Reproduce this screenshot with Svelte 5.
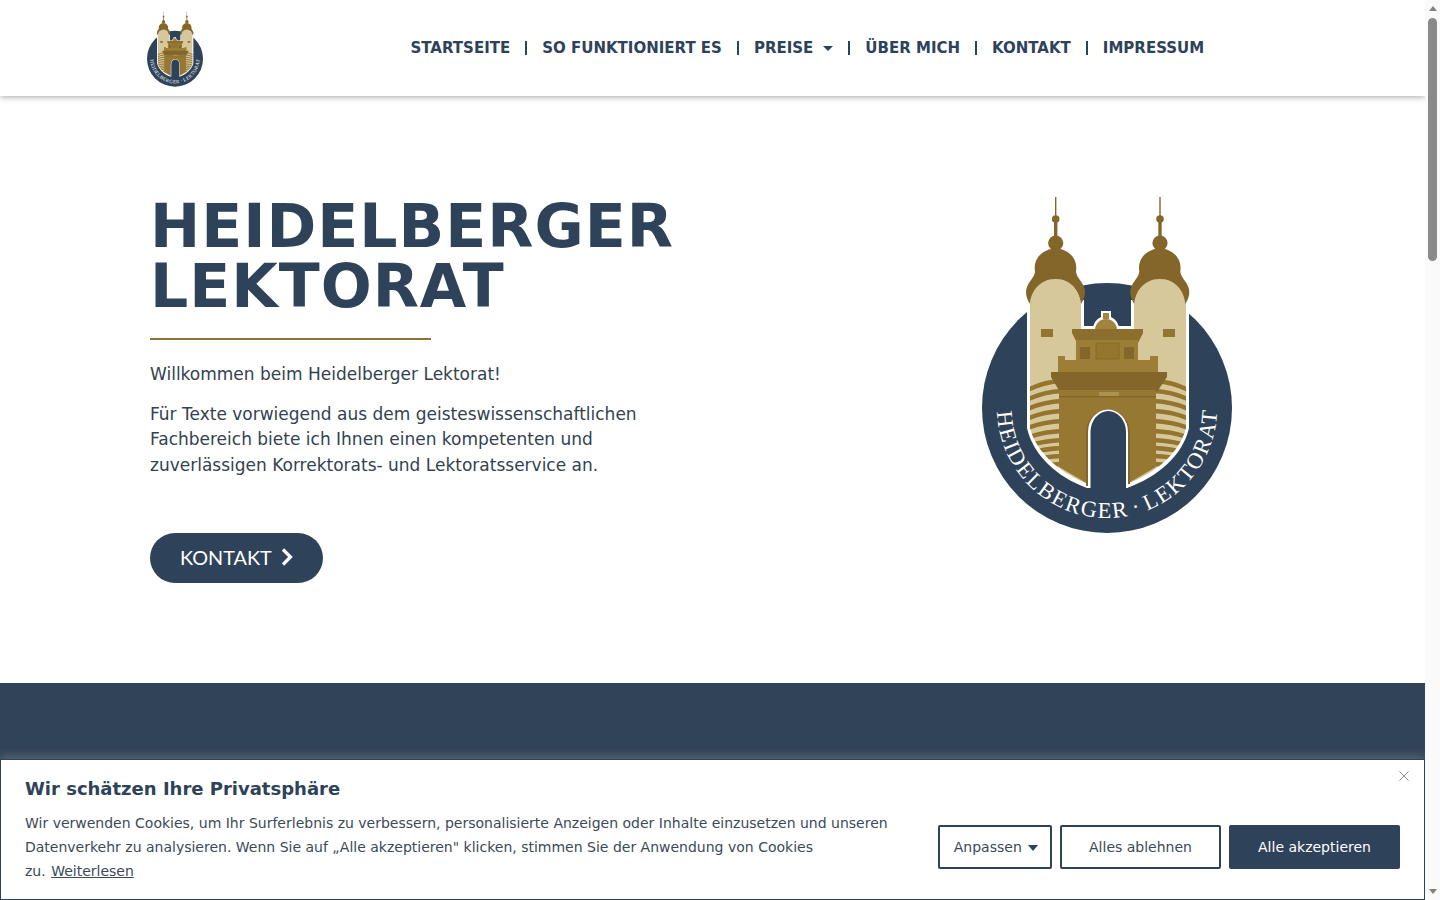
<script>
  const nav = [
    { label: "STARTSEITE" },
    { label: "SO FUNKTIONIERT ES" },
    { label: "PREISE", caret: true },
    { label: "ÜBER MICH" },
    { label: "KONTAKT" },
    { label: "IMPRESSUM" },
  ];

  // bands on the tower walls, y where they meet the gate
  const bands = [381, 391, 401, 411, 421, 431, 440, 448, 456, 464];

  const dome = "M1030 304C1026 298 1025 292 1027 287C1029 281 1034 278 1035 272C1033 258 1042 250 1055.7 248C1069 250 1078 258 1076 272C1077 278 1082 281 1084 287C1086 292 1085 298 1081 304C1080 290 1070 279 1055.7 279C1041 279 1031 290 1030 304Z";
</script>

{#snippet tower()}
  <path d="M1055 197h1.400V216h-1.400zM1054 222h3.400v16h-3.400z" />
  <circle cx="1055.7" cy="219" r="3.800" />
  <circle cx="1055.7" cy="243" r="7.600" />
  <path d={dome} />
{/snippet}

{#snippet logo(cls)}
  <svg class={cls} viewBox="982 196 250 337" aria-label="Heidelberger Lektorat">
    <defs>
      <clipPath id="{cls}-shield">
        <path d="M1030 305C1030 290 1041 279 1056 279C1070 279 1081 290 1081 305V329H1134V305C1134 290 1145 279 1160 279C1174 279 1186 290 1186 305V428C1180 452 1156 473 1127 484H1088C1060 473 1036 452 1030 428Z" />
      </clipPath>
      <path id="{cls}-arc" d="M997 408A110 110 0 0 0 1217 408" />
    </defs>

    <circle cx="1107" cy="408" r="125" fill="#2e4259" />

    <path fill="#fff" d="M1027 300H1084V326H1131V300H1189V428C1183 455 1158 477 1127 488H1087C1057 477 1033 455 1027 428Z" />
    <path fill="#d6c89b" clip-path="url(#{cls}-shield)" d="M1030 270H1186V490H1030Z" />

    <g clip-path="url(#{cls}-shield)" fill="none" stroke="#94752f" stroke-width="4.400">
      {#each bands as y, i}
        <path d="M1026 {y + 10 - i * 0.6}Q1042 {y + 1} 1062 {y}" />
        <path d="M1190 {y + 10 - i * 0.6}Q1174 {y + 1} 1154 {y}" />
      {/each}
    </g>

    <!-- towers -->
    <rect x="1041" y="329" width="12" height="8" fill="#94752f" />
    <rect x="1163" y="329" width="12" height="8" fill="#94752f" />
    <g fill="#85662a">{@render tower()}</g>
    <g fill="#85662a" transform="translate(104.300 0)">{@render tower()}</g>

    <!-- gate -->
    <path fill="#fff" d="M1093 330A13 14 0 0 1 1101 317V311H1111V317A13 14 0 0 1 1119 330Z" />
    <path fill="#a1843e" d="M1095 330A11 11 0 0 1 1117 330Z" />
    <rect x="1103" y="313" width="6" height="6" fill="#a1843e" />
    <path fill="#8c6e2d" d="M1072 329H1143V333L1138 343H1077L1072 333Z" />
    <rect x="1076" y="340" width="62" height="20" fill="#9c7e36" />
    <rect x="1080" y="347" width="10" height="12" fill="#85662a" />
    <rect x="1124" y="347" width="10" height="12" fill="#85662a" />
    <rect x="1096" y="343" width="23" height="16" fill="#94762f" stroke="#85662a" stroke-width=".8" />
    <path fill="#9c7e36" d="M1058 356H1065V360H1150V356H1158V373H1058Z" />
    <path fill="#85662a" d="M1051 372H1167V377L1157 392H1060L1051 377Z" />
    <path fill="#967832" d="M1059 390H1156V467L1127 484H1088L1059 467Z" />
    <rect x="1059" y="396" width="97" height="1.400" fill="#85662a" />
    <rect x="1099" y="392" width="20" height="4" fill="#ad9150" />
    <path fill="#85662a" d="M1086 486V432A21.500 21.500 0 0 1 1130 432V484Z" />
    <path fill="#fff" d="M1088 489V432A19.500 22 0 0 1 1128 432V489Z" />
    <path fill="#2e4259" d="M1090.500 495V432A17 20 0 0 1 1126 432V495Z" />
    <path fill="#2e4259" d="M1086 488H1131V500H1086Z" />

    <text class="seal" fill="#fff">
      <textPath href="#{cls}-arc" startOffset="4" textLength="338" lengthAdjust="spacing">HEIDELBERGER · LEKTORAT</textPath>
    </text>
  </svg>
{/snippet}

<div class="window">
  <div class="page">
    <header>
      {@render logo("mark")}
      <nav>
        {#each nav as item, i}
          {#if i > 0}<span class="sep"></span>{/if}
          <a href="#top">
            {item.label}
            {#if item.caret}<span class="caret"></span>{/if}
          </a>
        {/each}
      </nav>
    </header>

    <section class="hero">
      <div class="intro">
        <h1>HEIDELBERGER<br />LEKTORAT</h1>
        <div class="rule"></div>
        <p>Willkommen beim Heidelberger Lektorat!</p>
        <p>Für Texte vorwiegend aus dem geisteswissenschaftlichen<br />Fachbereich biete ich Ihnen einen kompetenten und<br />zuverlässigen Korrektorats- und Lektoratsservice an.</p>
        <a class="cta" href="#top">
          KONTAKT
          <svg viewBox="0 0 12 18" width="12" height="18"><path d="M2 1.500 9.500 9 2 16.500" fill="none" stroke="#fff" stroke-width="3.200" /></svg>
        </a>
      </div>
      {@render logo("seal-logo")}
    </section>

    <section class="dark"></section>

    <aside class="cookies">
      <div class="copy">
        <h2>Wir schätzen Ihre Privatsphäre</h2>
        <p>Wir verwenden Cookies, um Ihr Surferlebnis zu verbessern, personalisierte Anzeigen oder Inhalte einzusetzen und unseren<br />Datenverkehr zu analysieren. Wenn Sie auf „Alle akzeptieren" klicken, stimmen Sie der Anwendung von Cookies<br />zu. <a href="#top">Weiterlesen</a></p>
      </div>
      <div class="actions">
        <button class="outline custom">Anpassen <span class="down"></span></button>
        <button class="outline reject">Alles ablehnen</button>
        <button class="solid">Alle akzeptieren</button>
      </div>
      <svg class="close" viewBox="0 0 10 10" width="10" height="10"><path d="M.5.500l9 9M9.500.500l-9 9" stroke="#5d6d7e" stroke-width=".8" fill="none" /></svg>
    </aside>
  </div>

  <div class="scrollbar">
    <span class="arrow up"></span>
    <span class="thumb"></span>
    <span class="arrow dn"></span>
  </div>
</div>

<style>
  :global(body) { margin: 0; background: #fff; overflow: hidden; }

  .window { display: grid; grid-template-columns: 1fr 15px; height: 100vh; overflow: hidden; font-family: "DejaVu Sans", sans-serif; color: #2e4259; }
  .page { position: relative; overflow: hidden; display: flex; flex-direction: column; }

  header { position: relative; z-index: 2; flex: none; height: 96px; display: flex; align-items: center; padding-left: 147px; background: #fff; box-shadow: 0 1px 6px rgba(0,0,0,.35); }
  :global(.mark) { width: 56px; height: 76px; margin-top: 2px; flex: none; }
  nav { display: flex; align-items: center; margin-left: 207.500px; }
  nav a { color: #2e4259; font-size: 15px; font-weight: 700; text-decoration: none; white-space: nowrap; display: flex; align-items: center; gap: 10px; }
  .sep { width: 2px; height: 14px; margin: 0 15px; background: #2e4259; }
  .caret { width: 0; height: 0; border: 5px solid transparent; border-top: 5px solid #2e4259; border-bottom: 0; }

  .hero { flex: none; height: 587px; box-sizing: border-box; display: flex; justify-content: space-between; padding: 100px 193px 0 150px; }
  .intro { width: 560px; }
  h1 { margin: 0; font-size: 60px; line-height: 60px; font-weight: 700; letter-spacing: 1px; white-space: nowrap; }
  .rule { width: 281px; height: 2px; margin: 22px 0 22px; background: #8f7130; }
  .intro p { margin: 0 0 14px; font-size: 17px; line-height: 25.500px; color: #33424f; white-space: nowrap; }
  .cta { display: inline-flex; align-items: center; gap: 9px; box-sizing: border-box; height: 50px; margin-top: 41px; padding: 0 30px 2px; border-radius: 25px; background: #2e4259; color: #fff; font-family: Lato, sans-serif; font-size: 19.800px; text-decoration: none; }
  :global(.seal-logo) { width: 250px; height: 337px; flex: none; margin-top: 0; }
  :global(.seal) { font-family: "Liberation Serif", serif; font-size: 22.500px; word-spacing: -3px; }

  .dark { flex: 1; background: #314358; }

  .cookies { position: absolute; left: 0; right: 0; bottom: 0; z-index: 3; box-sizing: border-box; height: 141px; display: flex; justify-content: space-between; align-items: flex-end; padding: 0 24px 18px 24px; background: #fff; border: 1px solid #2e4259; box-shadow: 0 -2px 10px rgba(190,190,190,.35); }
  h2 { margin: 0 0 10px; font-size: 18px; line-height: 24px; font-weight: 700; color: #2e4259; }
  .copy p { margin: 0 0 -2px; font-size: 14px; line-height: 24px; color: #3b4a57; white-space: nowrap; }
  .copy a { margin-left: 1px; color: inherit; }
  .actions { display: flex; gap: 8px; margin-bottom: 12px; }
  button { box-sizing: border-box; height: 44px; border-radius: 2px; font: inherit; font-size: 14px; cursor: pointer; }
  .outline { background: #fff; border: 2px solid #2e4259; color: #3b4a57; }
  .custom { width: 114px; padding: 0 0 0 2px; }
  .reject { width: 161px; }
  .solid { width: 171px; background: #2e4259; border: 0; color: #fff; }
  .down { display: inline-block; margin-left: 2px; vertical-align: middle; width: 0; height: 0; border: 5px solid transparent; border-top: 6px solid #2e4259; border-bottom: 0; }
  .close { position: absolute; top: 11px; right: 15px; }

  .scrollbar { display: flex; flex-direction: column; align-items: center; background: #fafafa; }
  .arrow { flex: none; width: 0; height: 0; border: 4.500px solid transparent; }
  .arrow.up { margin-top: 6px; border-bottom: 5px solid #808080; border-top: 0; }
  .arrow.dn { margin-top: auto; margin-bottom: 6px; border-top: 5px solid #808080; border-bottom: 0; }
  .thumb { width: 9px; height: 243px; margin-top: 7px; border-radius: 5px; background: #8a8a8a; }
</style>
